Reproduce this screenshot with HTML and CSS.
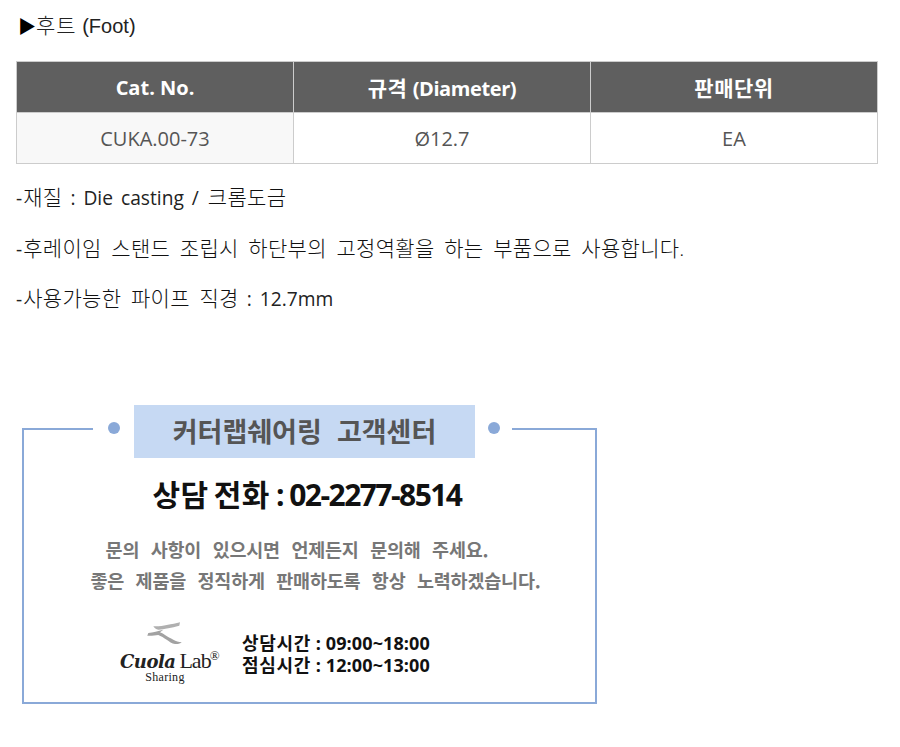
FILE: index.html
```html
<!DOCTYPE html>
<html lang="ko">
<head>
<meta charset="utf-8">
<title>후트 (Foot)</title>
<link rel="stylesheet" href="styles.css">
</head>
<body>
<main class="page">
  <h2 class="title"><span class="arrow">▶</span><span class="ko">후트</span> (Foot)</h2>
  <table class="spec">
    <colgroup><col class="c1"><col class="c2"><col class="c3"></colgroup>
    <thead><tr><th>Cat. No.</th><th><span class="ko">규격</span> <span class="diam">(Diameter)</span></th><th><span class="ko">판매단위</span></th></tr></thead>
    <tbody><tr><td class="first">CUKA.00-73</td><td>Ø12.7</td><td>EA</td></tr></tbody>
  </table>
  <p class="note">-<span class="ko">재질</span> : Die casting / <span class="ko">크롬도금</span></p>
  <p class="note">-<span class="ko">후레이임 스탠드 조립시 하단부의 고정역활을 하는 부품으로 사용합니다.</span></p>
  <p class="note">-<span class="ko">사용가능한 파이프 직경</span> : 12.7mm</p>

  <section class="center">
    <header class="center-head">
      <span class="rule rule-left"></span>
      <span class="dot dot-left"></span>
      <h3 class="center-title">커터랩쉐어링&nbsp; 고객센터</h3>
      <span class="dot dot-right"></span>
      <span class="rule rule-right"></span>
    </header>
    <div class="center-body">
      <p class="phone"><span class="ko">상담 전화</span> : 02-2277-8514</p>
      <p class="msg msg-one">문의 사항이 있으시면 언제든지 문의해 주세요.</p>
      <p class="msg msg-two">좋은 제품을 정직하게 판매하도록 항상 노력하겠습니다.</p>
      <div class="foot">
        <div class="logo">
          <svg class="swoosh" width="36" height="24" viewBox="0 0 36 24" aria-hidden="true">
            <path d="M6.3 5.3 C11 5.5 16 5 19.7 4 C25 3 29 2.5 33 1.3 L32.3 4.7 C28 6 25 6.5 21.3 7.3 C17 8 14 8.8 11.3 8.7 C9 8.5 7.5 7 6.3 5.3Z" fill="#b0b0b0"/>
            <path d="M16.3 8.7 C11 10 6 11.5 1.3 12 L0.3 14.7 C4 15 8 14.5 11.3 14 C14 15 17 17 19.7 18.7 C22 20.5 25 22.5 28 23 C31 23.3 33.5 22.5 34.7 21.3 C31.5 21 29 20.2 26.3 18.7 C23.5 17.3 20.5 15.5 18 14 C16 12.5 14.5 11.8 13 11.3Z" fill="#a2a2a2"/>
          </svg>
          <div class="logo-name"><span class="cuola">Cuola</span><span class="lab">Lab</span><span class="reg">®</span></div>
          <div class="sharing">Sharing</div>
        </div>
        <p class="hours"><span class="ko">상담시간</span> : 09:00~18:00<br><span class="ko">점심시간</span> : 12:00~13:00</p>
      </div>
    </div>
  </section>
</main>
</body>
</html>
```

FILE: styles.css
```css
* { box-sizing: border-box; }
html, body { margin: 0; padding: 0; background: #fff; }
body { font-family: "Open Sans", "Noto Sans CJK KR", sans-serif; color: #333; }
.page { width: 900px; height: 747px; padding: 13px 0 0 16px; overflow: hidden; }
.title { margin: 0 0 22px 2px; height: 26px; font-family: "Liberation Sans", "Noto Sans CJK KR", sans-serif; font-size: 20px; line-height: 26px; font-weight: 400; color: #222; }
.title .ko { font-size: 21px; font-weight: 300; letter-spacing: 1px; }
.arrow { color: #000; font-size: 18px; }
.spec { width: 861px; border-collapse: collapse; table-layout: fixed; font-size: 20px; }
.c1 { width: 277px; } .c2 { width: 297px; } .c3 { width: 287px; }
.spec th, .spec td { border: 1px solid #ccc; text-align: center; padding: 0; }
.spec th { height: 51px; background: #5f5f5f; color: #fff; font-weight: 700; font-size: 20px; }
.spec th .ko { font-size: 21px; letter-spacing: 0.5px; }
.spec .diam { letter-spacing: -0.4px; }
.spec td { height: 51px; color: #555; }
.spec .first { background: #f8f8f8; }
.note { margin: 0; height: 50.5px; line-height: 67px; font-size: 19.2px; color: #222; font-weight: 400; word-spacing: 3px; }
.note .ko { margin-left: 1px; font-size: 21px; font-weight: 300; color: #111; letter-spacing: 0.3px; word-spacing: 3.9px; }
.center { width: 575px; margin: 89px 0 0 6px; }
.center-head { display: flex; align-items: flex-start; height: 53px; }
.rule { display: block; height: 30px; margin-top: 23px; border-top: 2px solid #8aa9d8; }
.rule-left { width: 71px; border-left: 2px solid #8aa9d8; }
.rule-right { width: 85px; border-right: 2px solid #8aa9d8; }
.dot { width: 12px; height: 12px; margin-top: 17px; border-radius: 50%; background: #8aa9d8; }
.dot-left { margin-left: 15px; margin-right: 14px; }
.dot-right { margin-left: 13px; margin-right: 12px; }
.center-title { width: 341px; height: 53px; margin: 0; background: #c6d9f3; color: #555; font-size: 27px; line-height: 51px; font-weight: 700; text-align: center; font-family: "Noto Sans CJK KR", sans-serif; }
.center-body { height: 246px; border: 2px solid #8aa9d8; border-top: 0; padding-top: 17px; }
.phone { margin: 0 0 19px; padding-right: 5px; text-align: center; font-size: 30px; line-height: 40px; font-weight: 700; color: #111; letter-spacing: -1.55px; }
.phone .ko { letter-spacing: 0.4px; word-spacing: -3px; }
.msg { margin: 0; text-align: center; font-size: 18.5px; line-height: 31px; font-weight: 700; color: #777; letter-spacing: -0.2px; word-spacing: 6.5px; font-family: "Noto Sans CJK KR", sans-serif; }
.msg-one { padding-right: 25px; }
.msg-two { padding-left: 12px; }
.foot { display: flex; align-items: flex-start; margin-top: 25px; padding-left: 96px; }
.logo { width: 100px; height: 64px; font-family: "Liberation Serif", serif; color: #222; text-align: center; }
.swoosh { display: block; margin: 0 0 5px 27px; }
.logo-name { display: flex; align-items: baseline; height: 21px; line-height: 21px; white-space: nowrap; }
.cuola { font-family: "DejaVu Serif", serif; font-style: italic; font-weight: 700; font-size: 18px; letter-spacing: -0.5px; }
.lab { font-size: 22px; margin-left: 4px; letter-spacing: -1px; }
.reg { font-size: 13px; margin-left: -1px; position: relative; top: -8px; }
.sharing { font-size: 12px; line-height: 12px; width: 90px; letter-spacing: 0.3px; }
.hours { margin: 11px 0 0 22px; font-size: 18px; line-height: 22px; font-weight: 700; color: #111; letter-spacing: 0.1px; white-space: nowrap; }
.hours .ko { letter-spacing: 0.7px; }
```
